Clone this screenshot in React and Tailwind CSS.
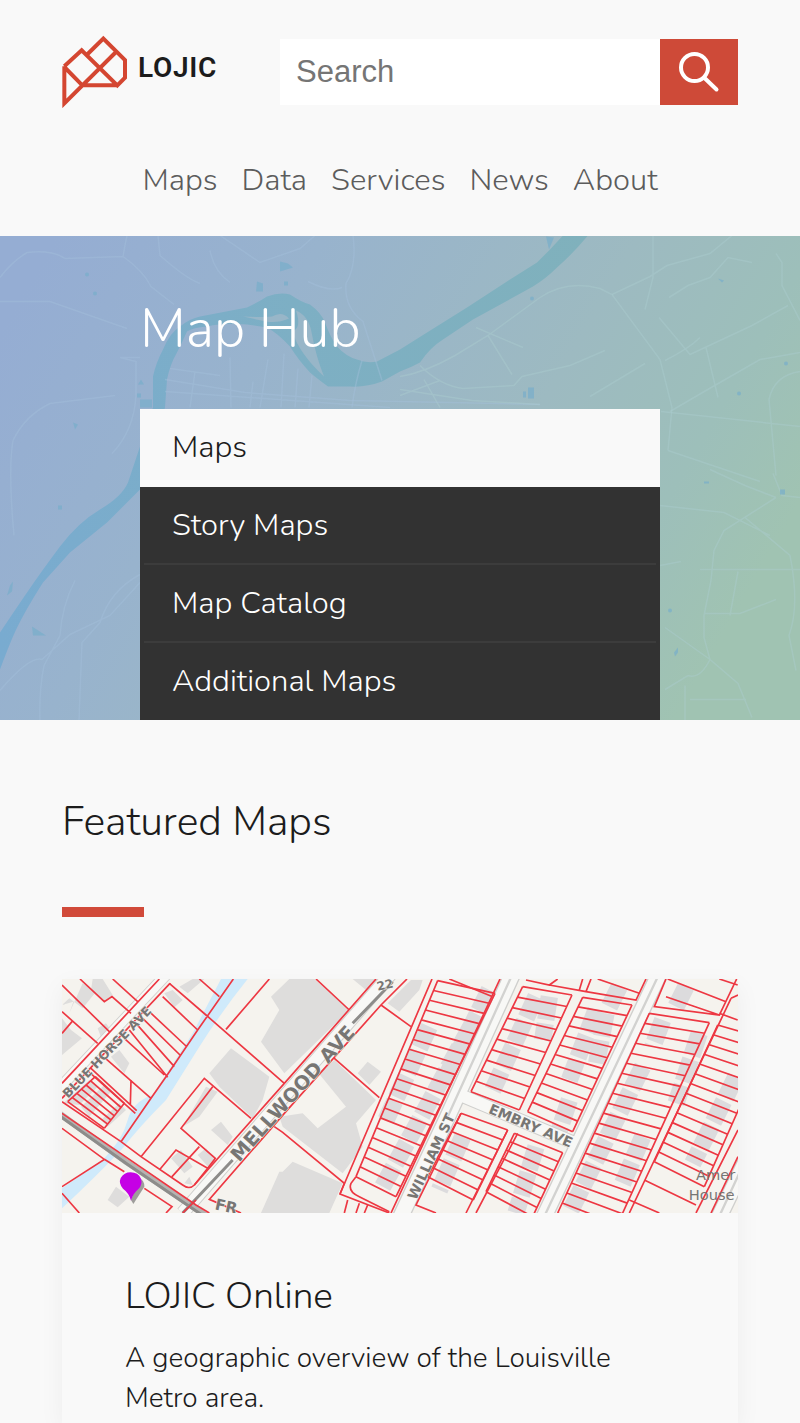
import React from "react";

const navItems = ["Maps", "Data", "Services", "News", "About"];
const menuItems = ["Story Maps", "Map Catalog", "Additional Maps"];

function LogoMark() {
  return (
    <svg viewBox="66 42 198 219" className="h-[73px] w-[66px]" fill="none" stroke="#d44631" strokeWidth="12" aria-hidden="true">
      <path d="M73 136 L125 88 L232 193 L255 170 V117 L190 53 L143 99 M73 136 V247 L228 93 M73 138 L127 193 H234" />
    </svg>
  );
}

function SearchIcon() {
  return (
    <svg viewBox="0 0 78 66" className="h-[66px] w-[78px]" fill="none" stroke="#fff" strokeWidth="4" strokeLinecap="round" aria-hidden="true">
      <circle cx="34.5" cy="28.5" r="13.5" />
      <path d="M44.5 39 L56.5 50.5" />
    </svg>
  );
}

function HeroMap() {
  return (
    <svg viewBox="0 0 800 485" preserveAspectRatio="xMidYMid slice" className="absolute inset-0 h-full w-full" aria-hidden="true">
      <defs>
        <linearGradient id="tint" x1="0" y1="0.2" x2="1" y2="0.55">
          <stop offset="0" stopColor="#95add3" />
          <stop offset="0.3" stopColor="#98b3cd" />
          <stop offset="0.65" stopColor="#9dbac1" />
          <stop offset="0.85" stopColor="#9dbfba" />
          <stop offset="1" stopColor="#a0c3b2" />
        </linearGradient>
        <linearGradient id="water" x1="0" y1="0" x2="1" y2="0">
          <stop offset="0" stopColor="#79abd0" />
          <stop offset="0.5" stopColor="#7dafc4" />
          <stop offset="1" stopColor="#80b1bc" />
        </linearGradient>
      </defs>
      <rect width="800" height="485" fill="url(#tint)" />
      <path
        fill="url(#water)"
        d="M0 397 Q12 379 27 357 T60 311 T100 274 T128 247 L153 172 L153 141 Q156 127 163 114 Q170 97 180 91 Q190 83 200 81 L247 72 Q258 67 267 61 Q280 56 290 59 Q302 67 310 69 Q321 77 325 87 Q330 101 337 111 Q346 121 357 124 Q367 128 377 126 L400 114 L427 97 L467 72 L510 44 L537 27 L550 14 L563 0 H588 Q572 19 557 32 Q546 43 533 51 L473 84 L443 104 Q430 112 420 127 Q411 132 400 136 L382 146 Q366 152 350 151 H328 Q317 143 310 137 Q298 124 290 111 Q278 98 267 92 L247 89 Q224 87 207 91 Q193 92 187 96 Q182 107 177 117 Q170 129 167 144 L165 172 L140 254 L107 287 L70 317 L43 347 Q22 380 13 401 Q7 415 0 434 Z"
      />
      <g fill="#98b6c8">
        <path d="M296 75 Q309 80 312 99 Q316 121 324 141 Q300 119 292 96 Q302 93 296 75Z" />
        <path d="M243 81 Q261 82 272 81 Q282 75 289 83 Q278 88 266 86 Z" />
      </g>
      <g fill="none" stroke="#a5c1dc" strokeOpacity="0.4" strokeWidth="1.5">
        <path d="M0 42 Q12 26 27 17 Q52 14 65 23 L123 21 Q125 9 127 0 M123 21 Q143 35 151 51 L174 69 M0 66 H50 L127 93 M140 122 H120 L136 126 V160 Q134 195 112 218 M115 160 L50 168 Q25 180 13 205 Q8 235 14 300 M158 0 L160 20 Q186 43 200 48 M210 15 Q214 36 230 47 M220 0 L260 27 L300 13 L315 0 M353 0 Q357 30 346 48 Q344 72 363 86 L382 145 M308 46 Q330 57 342 52 M362 125 Q355 148 352 172" />
        <path d="M165 144 L245 157 L350 165 L540 169 M165 156 L390 172 M230 122 L231 172 M253 146 L250 172 M268 124 L260 172 M284 118 L281 172 M298 133 L295 172 M312 140 L309 172 M195 136 L190 172 M170 133 L220 140" />
        <path d="M0 455 Q30 420 42 424 L70 399 L110 380 L140 347 M44 430 Q39 455 40 485 M140 339 Q110 355 100 387 L82 407 L79 485 M75 345 Q62 370 60 400 L44 430" />
      </g>
      <g fill="none" stroke="#abcdd0" strokeOpacity="0.42" strokeWidth="1.5">
        <path d="M400 141 Q425 137 455 120 L488 100 L540 62 Q567 44 600 53 L612 59 L660 124 L672 172 L668 215 M488 100 L512 139 M476 92 L523 112 M420 130 Q440 150 463 153 L514 150 L522 141 L570 130 L605 115 M424 144 L440 172 M400 160 L440 145 M400 154 L472 165 L540 169" />
        <path d="M612 59 L650 41 L667 30 L710 18 L732 0 M653 0 V42 L645 74 M659 82 L690 119 L752 90 L788 70 M665 125 Q689 113 700 102 M670 176 L706 155 L760 124 L800 117 M776 18 L782 27 V50 L800 85 M800 136 Q774 140 769 164 L776 240 M661 176 L800 191 M668 215 L760 246 M752 27 L728 22 L710 42 L688 50 L669 62 M706 112 L718 162 M590 161 L645 128" />
        <path d="M776 262 L724 295 L714 315 L711 345 L704 380 V402 L710 424 Q700 444 688 440 L665 454 M710 234 L745 250 L776 262 M710 424 L738 448 L752 482 M660 270 L724 277 L770 300 M745 282 L790 320 Q800 370 789 400 L796 435 M700 334 H800 M704 378 H740 L776 364 M665 392 L710 424 M690 464 H746 M685 450 V485 M773 238 L782 260 L800 262 M660 330 L681 326 M738 336 L730 380" />
      </g>
      <g fill="#78aecb" fillOpacity="0.7">
        <path d="M280 26 L288 28 L293 32 L280 36 Z M257 46 L263 48 V56 H256 Z M284 46 h4 v4 h-4Z M140 164 h12 v8 h-12Z M137 158 h4 v4 h-4Z M141 144 l3 5 h-6Z M32 391 L46 400 H33 Z M58 270 h4 v4 h-4Z M528 152 h6 v11 h-6Z M523 156 h3 v6 h-3Z M10 350 l3 -4 -1 10 -5 4Z M73 187 l5 2 -3 5Z M546 1 l8 1 -5 12Z" />
        <circle cx="532" cy="63" r="2" /><circle cx="786" cy="128" r="2" /><circle cx="87" cy="39" r="2" /><circle cx="95" cy="58" r="2" /><circle cx="739" cy="158" r="2" /><circle cx="670" cy="375" r="2" />
        <path d="M674 417 l4 -5 v5 l-3 4Z M718 43 l6 2 -2 2Z M704 246 h5 v2 h-5Z M780 254 h5 v5 h-5Z" />
      </g>
    </svg>
  );
}

/* Parcel strip: two long sides (x, y pairs) joined by evenly spaced lot lines. */
function lots(ax, ay, bx, by, cx, cy, dx, dy, n) {
  let d = `M${ax} ${ay} L${bx} ${by} M${cx} ${cy} L${dx} ${dy}`;
  for (let i = 0; i <= n; i++) {
    const t = i / n;
    d += ` M${ax + (bx - ax) * t} ${ay + (by - ay) * t} L${cx + (dx - cx) * t} ${cy + (dy - cy) * t}`;
  }
  return d;
}

function ParcelMap() {
  return (
    <svg viewBox="38 27 2028 702" preserveAspectRatio="xMidYMid slice" className="block aspect-[676/234] w-full" role="img" aria-label="Parcel map">
      <rect x="38" y="27" width="2028" height="702" fill="#f5f3ee" />
      {/* creek */}
      <path d="M515 27 H595 Q520 120 450 230 L350 390 Q270 470 220 535 Q140 620 38 715 V655 L160 570 Q220 510 235 450 Q250 395 310 375 L430 190 Z" fill="#cfeafb" />
      {/* buildings */}
      <g fill="#dedddc">
        <path d="M38 105 L72 95 L60 130 L100 40 L140 65 L100 115 L60 85 Z M38 145 L65 180 L98 205 L38 255Z M130 27 H160 L190 75 L165 95 L125 60Z M345 70 L370 60 L400 90 L375 112Z M390 50 L430 27 H465 L415 70Z M145 175 L170 160 L195 195 L160 215Z M185 260 L210 240 L240 280 L225 310Z M42 400 L120 330 L145 350 L90 405Z M95 410 L165 345 L185 365 L120 440Z M155 450 L210 400 L230 420 L175 470Z" />
        <path d="M480 310 L545 235 L660 320 L640 390 L610 445 L510 350Z M400 470 L470 350 L505 365 L450 440Z M485 480 L515 455 L550 500 L535 525Z M365 565 L395 540 L430 590 L405 610Z M445 555 L470 535 L500 575 L480 595Z M175 690 L200 650 L240 680 L205 712Z M405 640 L420 620 L430 645Z" />
        <path d="M720 27 H795 L900 120 L705 310 L635 215 L690 120 L665 80Z M910 27 H985 L950 60Z M1015 100 L1085 30 H1120 L1110 60 L1050 125Z M808 310 L855 270 L980 390 L920 460 L940 530 L880 610 L700 470 L690 440 L760 430 L805 475 L890 410Z M700 605 L730 575 L880 640 L840 729 H635 L690 605Z M925 310 L955 275 L995 305 L960 345Z" />
      </g>
      <g stroke="#dcdbdd" strokeWidth="52" fill="none" strokeDasharray="70 12">
        <path d="M1320 60 L1180 340 M1270 160 L1000 650 M1140 170 L1010 450" />
        <path d="M1460 80 L1330 360 M1500 80 L1480 210 M1640 120 L1560 330 M1670 130 L1640 290 M1560 390 L1530 480" />
        <path d="M1240 500 L1170 660 M1460 530 L1400 729" />
        <path d="M1840 150 L1810 230 M1780 290 L1560 729 M1950 190 L1880 400 M2060 320 L1930 580 M1780 500 L1720 640 M1710 50 L1680 110 M1910 50 L1880 110" />
      </g>
      {/* streets */}
      <g fill="none" stroke="#cfcfcd" strokeWidth="52">
        <path d="M1395 0 L1195 440 L1045 760 M2155 440 L2000 760" />
        <path d="M1835 0 L1475 760" />
        <path d="M1220 370 L1590 525 M1035 0 L400 729" strokeWidth="42" />
        <path d="M350 15 L30 355" strokeWidth="35" />
      </g>
      <g fill="none" stroke="#f8f8f6" strokeWidth="44">
        <path d="M1395 0 L1195 440 L1045 760 M2155 440 L2000 760 M1835 0 L1475 760" />
        <path d="M1220 370 L1590 525 M1035 0 L400 729" strokeWidth="36" />
        <path d="M350 15 L30 355" strokeWidth="30" />
      </g>
      <g stroke="#d2d2d0" strokeWidth="7">
        <path d="M1395 0 L1195 440 M1835 0 L1475 760 M2130 480 L2000 760" />
      </g>
      <path d="M30 430 L230 575 L490 750" fill="none" stroke="#b5b4b2" strokeWidth="18" />
      <path d="M30 437 L230 580 L480 750 M400 729 L550 570 M910 160 L1030 35" fill="none" stroke="#8d8c8a" strokeWidth="9" />
      {/* parcels */}
      <g fill="none" stroke="#ed3742" strokeWidth="5">
        <path d="M330 27 L38 340 M362 40 L38 385 M38 45 L180 185 M92 27 L165 95 L188 80 L245 130 M190 27 L265 95 M38 125 L145 220 M38 190 L68 155 M360 40 L470 135 L705 340 M450 27 L510 80 M340 80 L445 180 M552 27 L445 180 L350 320 L305 385 L215 515 M660 27 L530 178 M300 125 L410 228 M280 145 L392 255 M260 160 L375 290 M240 180 L355 322 M225 205 L345 315 M165 262 L305 385 M245 330 L243 405 M118 305 L258 430 M125 295 L262 422 M38 395 L215 515 L275 560 L400 645 Q420 660 435 645 L475 595 L380 540 L330 600 M38 475 L165 568 L38 650 M165 568 L225 605 M38 670 L90 729 M285 655 L368 710 L350 729 M275 560 L465 325 L605 445 M490 350 L395 475 L498 565 L475 595 M450 530 L368 620" />
        <path d="M980 27 L705 340 L435 645 M1073 27 L995 105 L705 430 L480 688 L575 729 M800 27 L900 120 M995 105 L1085 170 M855 265 L990 383 M675 470 L700 487 L885 640 L872 672 L1020 729 M38 430 L440 705 L480 729 M400 729 L440 690" />
        <path d={lots(138, 320, 55, 395, 225, 400, 165, 475, 6)} />
        <path d="M1148 27 L872 672 M920 620 L905 640 Q895 665 930 680 L1020 725 M895 690 L885 729 M930 700 L920 729 M955 705 L945 729" />
        <path d={lots(1165, 32, 920, 620, 1337, 70, 1040, 680, 20)} />
        <path d="M1352 27 L1025 729 M1200 27 L1330 80" />
        <path d={lots(1235, 430, 1135, 620, 1375, 480, 1272, 690, 7)} />
        <path d="M1235 430 L1100 705 L1160 729 M1375 480 L1250 729 M1405 490 L1280 729" />
        <path d={lots(1395, 490, 1310, 665, 1540, 548, 1450, 740, 7)} />
        <path d={lots(1420, 50, 1265, 365, 1568, 75, 1410, 420, 10)} />
        <path d={lots(1600, 82, 1435, 425, 1748, 105, 1570, 485, 12)} />
        <path d="M1430 30 L1500 45 L1525 27 M1500 45 L1610 65 L1760 90 L1790 27 M1610 65 L1625 27 M1590 60 L1600 27 M1645 27 L1770 70" />
        <path d="M1850 27 L1815 110 L2010 135 L2062 27 M1850 80 L2010 135 M1855 27 L2030 95 M2010 27 L2065 45 M2010 130 L2065 150 M2045 85 L2066 75" />
        <path d={lots(1800, 130, 1525, 729, 1980, 158, 1690, 795, 20)} />
        <path d={lots(2005, 165, 1815, 575, 2160, 210, 1965, 650, 14)} />
        <path d="M2045 85 L1740 729 M1785 630 L1940 705 M1740 690 L1830 729 M2066 480 L1940 729 M2066 560 L1985 729" />
      </g>
      {/* labels */}
      <g fill="#777674" stroke="#f7f6f3" strokeWidth="3" paintOrder="stroke" fontFamily="DejaVu Sans, sans-serif" fontWeight="700">
        <text transform="translate(56 386) rotate(-46)" fontSize="38">BLUE HORSE AVE</text>
        <text transform="translate(570 578) rotate(-48)" fontSize="58">MELLWOOD AVE</text>
        <text transform="translate(1100 692) rotate(-65)" fontSize="42">WILLIAM ST</text>
        <text transform="translate(1315 428) rotate(23)" fontSize="42">EMBRY AVE</text>
        <g fontWeight="400" strokeWidth="0">
          <text x="1940" y="630" fontSize="44">Amer</text>
          <text x="1918" y="690" fontSize="44">House</text>
        </g>
        <text transform="translate(495 718) rotate(12)" fontSize="46">FR</text>
        <text transform="translate(985 62) rotate(-12)" fontSize="36">22</text>
      </g>
      {/* marker */}
      <path d="M252 702 L285 650 Q285 630 270 625 L245 690Z" fill="#555" fillOpacity="0.55" />
      <path d="M245 692 Q240 670 221 656 Q207 640 214 624 Q224 607 244 607 Q266 607 275 626 Q280 643 268 656 Q250 671 245 692Z" fill="#c500e5" />
    </svg>
  );
}

export default function App() {
  return (
    <div className="bg-[#f9f9f9] font-['Nunito','Open_Sans',sans-serif] font-[350] text-[#1c1c1c]">
      <header className="flex flex-col gap-12 px-[62px] pt-[35px] pb-8">
        <div className="flex items-center justify-between gap-[62px]">
          <a href="#" className="flex w-[156px] shrink-0 items-center gap-[10px]">
            <LogoMark />
            <span className="pb-2 font-['Roboto',sans-serif] text-[28px] leading-8 font-semibold tracking-wide">LOJIC</span>
          </a>
          <form className="flex min-w-0 flex-1" onSubmit={(e) => e.preventDefault()}>
            <input
              type="search"
              aria-label="Search"
              placeholder="Search"
              className="h-[66px] min-w-0 flex-1 bg-white px-4 font-['Liberation_Sans',sans-serif] text-[31px] font-normal outline-none placeholder:text-[#757575]"
            />
            <button type="submit" aria-label="Submit search" className="shrink-0 bg-[#ce4a38]">
              <SearchIcon />
            </button>
          </form>
        </div>
        <nav className="flex justify-center gap-6 text-[31px] leading-[48px] text-[#5c5c5c]">
          {navItems.map((item) => (
            <a key={item} href="#">{item}</a>
          ))}
        </nav>
      </header>

      <section className="relative">
        <HeroMap />
        <div className="relative mx-auto w-[65%] pt-14">
          <h1 className="text-[54px] leading-[74px] font-light text-white">Map Hub</h1>
          <nav className="mt-[43px] bg-[#323232] text-[31px] leading-[76px] text-white">
            <a href="#" aria-current="page" className="block bg-[#f9f9f9] px-8 pb-[2px] text-[#1c1c1c]">Maps</a>
            <ul className="divide-y-2 divide-[#3c3c3c] px-1 pb-px">
              {menuItems.map((item) => (
                <li key={item}>
                  <a href="#" className="block px-7">{item}</a>
                </li>
              ))}
            </ul>
          </nav>
        </div>
      </section>

      <main className="px-[62px] pt-[74px]">
        <h2 className="text-[41px] leading-[56px] font-light">Featured Maps</h2>
        <div className="mt-[57px] h-[10px] w-[82px] bg-[#d14a3a]" />
        <article className="mt-[62px] bg-[#f9f9f9] shadow-[0_8px_24px_rgba(0,0,0,0.05)]">
          <ParcelMap />
          <div className="px-[63px] pt-[57px] pb-[5px]">
            <h3 className="text-[37px] leading-[52px]">LOJIC Online</h3>
            <p className="mt-4 text-[28px] leading-10">A geographic overview of the Louisville Metro area.</p>
          </div>
        </article>
      </main>
    </div>
  );
}
